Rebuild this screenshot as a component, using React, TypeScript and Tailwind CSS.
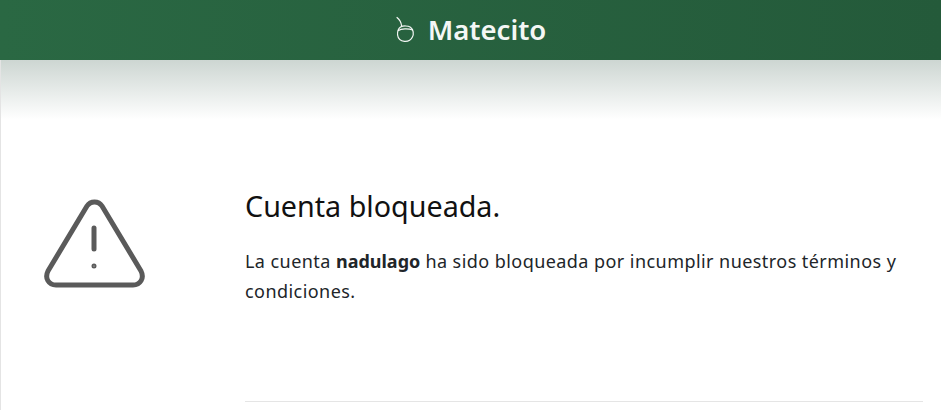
import React from 'react';

const MateIcon: React.FC = () => (
  <svg width="20" height="28" viewBox="0 0 20 28" fill="none" stroke="#f4f7f5" strokeWidth="1.2" strokeLinecap="round">
    <path d="M2 1.5 C4.5 3.5 6.2 6 6.6 10" />
    <path d="M5.5 11 C8 9.6 13 9.6 15.5 11.2 C18.5 13.5 19 18 17.4 21 C15.8 24.6 12.5 25.6 9.5 25.4 C6 25 3 22.5 2.6 19 C2.3 15.5 3.5 12.5 5.5 11 Z" />
    <path d="M3.4 14.4 C6 12.6 13.5 12.2 17.6 14" />
  </svg>
);

const WarningIcon: React.FC = () => (
  <svg width="102" height="90" viewBox="0 0 102 90" fill="none" stroke="#5a5a5a" strokeWidth="5" strokeLinecap="round" strokeLinejoin="round">
    <path d="M43 7 C46.5 1.5 54.5 1.5 58 7 L97 72 C100.5 79 96.5 86 89 86 L12 86 C4.5 86 0.5 79 4 72 Z" />
    <path d="M50 29 L50 50" />
    <circle cx="50" cy="67" r="1" strokeWidth="3" />
  </svg>
);

export default function App() {
  return (
    <div className="h-[410px] w-[941px] overflow-hidden bg-white font-['Noto_Sans',sans-serif] text-[#212529]">
      <header className="flex h-[60px] items-center justify-center gap-[13px] bg-gradient-to-r from-[#2a6843] to-[#245a3a]">
        <MateIcon />
        <span className="mb-[1px] text-[27.5px] font-semibold leading-none text-[#f4f7f5]">Matecito</span>
      </header>
      <main className="h-[350px] border-l border-[#e4e4e4] bg-gradient-to-b from-[#cdd6d2] via-white via-[17%] to-white">
        <div className="flex pr-[18px]">
          <div className="w-[244px] shrink-0 pl-[43px] pt-[139px]">
            <WarningIcon />
          </div>
          <div className="flex h-[342px] flex-1 flex-col border-b border-[#e5e5e5] pt-[128px]">
            <h1 className="text-[28.7px] font-normal leading-[36px] text-[#111]">Cuenta bloqueada.</h1>
            <p className="mt-[22px] text-[18px] leading-[30px] tracking-[0.44px]">
              La cuenta <strong className="font-bold tracking-normal">nadulago</strong> ha sido bloqueada por incumplir nuestros términos y condiciones.
            </p>
          </div>
        </div>
      </main>
    </div>
  );
}
